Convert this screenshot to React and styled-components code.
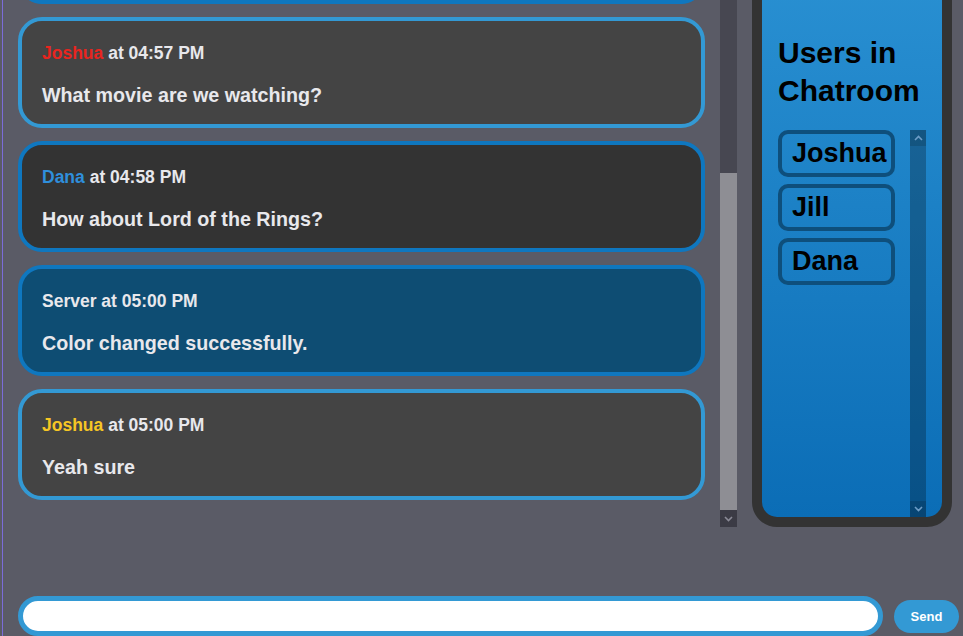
import { useLayoutEffect, useRef } from "react";
import styled, { createGlobalStyle } from "styled-components";

const GlobalStyle = createGlobalStyle`
  html, body {
    margin: 0;
    padding: 0;
    background: #5a5b66;
    overflow: hidden;
  }
  * {
    box-sizing: border-box;
  }
`;

const FONT = `"Liberation Sans", Arial, sans-serif`;

const Page = styled.div`
  margin-left: 2px;
  border-left: 1px solid #7b6cd9;
  height: 100vh;
  overflow: hidden;
  font-family: ${FONT};
  font-weight: 700;
`;

/* the chat area is taller than what fits: its top runs off the screen */
const Main = styled.div`
  display: flex;
  align-items: flex-end;
  gap: 15px;
  height: 527px;
  overflow: hidden;
  padding-left: 15px;
`;

const ChatArea = styled.section`
  flex: none;
  display: flex;
  gap: 15px;
  width: 719px;
  height: 567px;
`;

const ChatLog = styled.div`
  flex: 1;
  height: 100%;
  overflow: hidden;
  padding-bottom: 27px;
  display: flex;
  flex-direction: column;
  justify-content: flex-end;
  gap: 13px;
`;

const Rail = styled.div`
  flex: none;
  width: ${(p) => p.$size}px;
  height: 100%;
  display: flex;
  flex-direction: column;
`;

const RailButton = styled.div`
  flex: none;
  height: ${(p) => p.$size}px;
  background: ${(p) => p.$bg};
  display: flex;
  align-items: center;
  justify-content: center;
`;

const RailTrack = styled.div`
  flex: 1;
  background: ${(p) => p.$bg};
  display: flex;
  flex-direction: column;
  justify-content: flex-end;
`;

const Thumb = styled.div`
  height: ${(p) => p.$length}px;
  background: #8e8e94;
`;

const Chevron = ({ up, color }) => (
  <svg width="9" height="6" viewBox="0 0 9 6">
    <polyline
      points={up ? "1,5 4.5,1.5 8,5" : "1,1 4.5,4.5 8,1"}
      fill="none"
      stroke={color}
      strokeWidth="1.6"
    />
  </svg>
);

const ScrollBar = ({ size, trackBg, buttonBg, arrow, thumb }) => (
  <Rail $size={size}>
    <RailButton $size={size} $bg={buttonBg}>
      <Chevron up color={arrow} />
    </RailButton>
    <RailTrack $bg={trackBg}>{thumb ? <Thumb $length={thumb} /> : null}</RailTrack>
    <RailButton $size={size} $bg={buttonBg}>
      <Chevron color={arrow} />
    </RailButton>
  </Rail>
);

const tones = {
  light: { bg: "#444444", border: "#3399d4" },
  dark: { bg: "#333333", border: "#0f77bf" },
  server: { bg: "#0e4d73", border: "#0f77bf" },
};

const Card = styled.div`
  flex: none;
  border: 4px solid ${(p) => tones[p.$tone].border};
  background: ${(p) => tones[p.$tone].bg};
  border-radius: 24px;
  padding: 22px 20px 18px;
  color: #e8e8ec;
`;

const Meta = styled.div`
  font-size: 17.5px;
  line-height: 20px;
  margin-bottom: 21px;
`;

const Author = styled.span`
  color: ${(p) => p.$color || "inherit"};
`;

const Body = styled.div`
  font-size: 19.7px;
  line-height: 22px;
`;

const Panel = styled.aside`
  flex: none;
  width: 200px;
  height: 567px;
  border: 10px solid #333333;
  border-radius: 25px;
  background: linear-gradient(180deg, #2990d2 0%, #0b6db6 100%);
  padding: 0 16px;
  display: flex;
  flex-direction: column;
`;

const PanelTitle = styled.h2`
  margin: 64px 0 20px;
  font-size: 30px;
  line-height: 38px;
  font-weight: 700;
  color: #000;
`;

const UserArea = styled.div`
  flex: 1;
  min-height: 0;
  display: flex;
`;

const UserList = styled.ul`
  flex: 1;
  margin: 0;
  padding: 0;
  list-style: none;
  overflow: hidden;
  display: flex;
  flex-direction: column;
  gap: 7px;
`;

const UserItem = styled.li`
  flex: none;
  width: 117px;
  height: 47px;
  border: 4px solid #0e4f7c;
  border-radius: 10px;
  padding-left: 10px;
  font-size: 27px;
  line-height: 39px;
  color: #000;
  overflow: hidden;
  white-space: nowrap;
`;

const Composer = styled.form`
  display: flex;
  align-items: center;
  gap: 11px;
  margin-top: 69px;
  padding: 0 4px 0 15px;
`;

const MessageInput = styled.input`
  flex: 1;
  height: 40px;
  border: 5px solid #3399d4;
  border-radius: 20px;
  background: #fff;
  padding: 0 17px;
  font-family: ${FONT};
  font-size: 18px;
  color: #000;
  caret-color: #000;
  outline: none;
`;

const SendButton = styled.button`
  width: 65px;
  height: 33px;
  border: none;
  border-radius: 17px;
  background: #3399d4;
  color: #fff;
  font-family: ${FONT};
  font-size: 13px;
  font-weight: 700;
  cursor: pointer;
`;

const messages = [
  { user: "Jill", color: "#5fd068", time: "04:55 PM", text: "Hey everyone!", tone: "dark" },
  { user: "Dana", color: "#2f8fdc", time: "04:56 PM", text: "Hi Jill!", tone: "dark" },
  { user: "Jill", color: "#5fd068", time: "04:56 PM", text: "Movie night tonight?", tone: "dark" },
  { user: "Joshua", color: "#e8251f", time: "04:57 PM", text: "What movie are we watching?", tone: "light" },
  { user: "Dana", color: "#2f8fdc", time: "04:58 PM", text: "How about Lord of the Rings?", tone: "dark" },
  { user: "Server", time: "05:00 PM", text: "Color changed successfully.", tone: "server" },
  { user: "Joshua", color: "#f6c624", time: "05:00 PM", text: "Yeah sure", tone: "light" },
];

const users = ["Joshua", "Jill", "Dana"];

const App = () => {
  const inputRef = useRef(null);

  useLayoutEffect(() => {
    if (inputRef.current) inputRef.current.focus({ preventScroll: true });
  }, []);

  return (
    <Page>
      <GlobalStyle />
      <Main>
        <ChatArea>
          <ChatLog>
            {messages.map((m, i) => (
              <Card key={i} $tone={m.tone}>
                <Meta>
                  <Author $color={m.color}>{m.user}</Author> at {m.time}
                </Meta>
                <Body>{m.text}</Body>
              </Card>
            ))}
          </ChatLog>
          <ScrollBar size={17} trackBg="#474751" buttonBg="#3b3b45" arrow="#8a8a96" thumb={337} />
        </ChatArea>
        <Panel>
          <PanelTitle>
            Users in
            <br />
            Chatroom
          </PanelTitle>
          <UserArea>
            <UserList>
              {users.map((u) => (
                <UserItem key={u}>{u}</UserItem>
              ))}
            </UserList>
            <ScrollBar
              size={16}
              trackBg="rgba(0, 0, 0, 0.26)"
              buttonBg="rgba(0, 0, 0, 0.36)"
              arrow="#6d9cc6"
            />
          </UserArea>
        </Panel>
      </Main>
      <Composer onSubmit={(e) => e.preventDefault()}>
        <MessageInput ref={inputRef} />
        <SendButton type="submit">Send</SendButton>
      </Composer>
    </Page>
  );
};

export default App;
